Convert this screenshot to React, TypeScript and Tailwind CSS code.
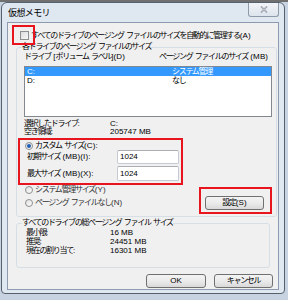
import type { ReactNode } from "react";

// Japanese runs get tightened, ASCII runs keep normal spacing
const J = ({ t, className = "" }: { t: string; className?: string }) => (
  <span className={`whitespace-pre ${className}`}>
    {t.split(/([\x20-\x7e]+)/).map((p, i) =>
      p === "" ? null : /^[\x20-\x7e]+$/.test(p) ? (
        <span key={i} className="tracking-[0.1px]">
          {p}
        </span>
      ) : (
        <span key={i} className="tracking-[-1.3px]">
          {p}
        </span>
      )
    )}
  </span>
);

const Radio = ({ checked = false }: { checked?: boolean }) => (
  <span className="w-[8px] h-[8px] rounded-full border border-[#8e8f8f] bg-gradient-to-br from-[#e2e2e2] to-[#fbfbfb] flex items-center justify-center shrink-0">
    {checked && <span className="w-[4px] h-[4px] rounded-full bg-[#1e5fb3]" />}
  </span>
);

const Btn = ({ children, className = "" }: { children: ReactNode; className?: string }) => (
  <div
    className={`h-[14px] border border-[#707070] rounded-[3px] bg-gradient-to-b from-[#f4f4f4] via-[#ebebeb] to-[#d9d9d9] flex items-center justify-center text-[8px] leading-none ${className}`}
  >
    {children}
  </div>
);

const Row = ({ label, value, w }: { label: string; value: string; w: string }) => (
  <div className="flex h-[8px] items-center text-[8px] leading-none">
    <div className={w}>
      <J t={label} />
    </div>
    <span>{value}</span>
  </div>
);

export default function App() {
  return (
    <div className="relative w-[288px] h-[300px] overflow-hidden bg-[#c7d3e0] font-['Liberation_Sans','Noto_Sans_CJK_JP',sans-serif] text-black">
      <div className="h-[2px] bg-[#707070]" />

      {/* window */}
      <div className="ml-[1px] w-[284px] h-[292px] border border-[#56616d] rounded-t-[6px] rounded-b-[4px] bg-[#dfe7f0] flex flex-col">
        {/* title bar */}
        <div className="h-[19px] flex shrink-0">
          <div className="pl-[6px] pt-[6px] text-[9px] leading-none tracking-[-0.6px]">仮想メモリ</div>
          <div className="ml-auto mr-[5px] w-[31px] h-[14px] border border-t-0 border-[#8e9aa8] rounded-b-[3px] bg-gradient-to-b from-[#f2f5f9] to-[#dde4ec] flex items-center justify-center">
            <svg width="8" height="7" viewBox="0 0 8 7">
              <path d="M1 0.5 L7 6.5 M7 0.5 L1 6.5" stroke="#8a939e" strokeWidth="1.6" />
              <path d="M1 0.5 L7 6.5 M7 0.5 L1 6.5" stroke="#f4f6f8" strokeWidth="0.5" />
            </svg>
          </div>
        </div>

        {/* client */}
        <div className="mx-[5px] h-[268px] border border-[#8d9bb0] bg-[#f0f0f0] overflow-hidden flex flex-col">
          <div className="mt-[8px] pl-[12px] flex items-center h-[9px] text-[8px] leading-none">
            <span className="w-[9px] h-[9px] border border-[#8e8f8f] bg-gradient-to-br from-[#dcdcdc] to-[#f8f8f8] shrink-0" />
            <J className="ml-[2px]" t="すべてのドライブのページング ファイルのサイズを自動的に管理する(A)" />
          </div>

          {/* group 1 */}
          <fieldset className="mt-[2px] ml-[8px] w-[261px] border border-[#d5dfe5] rounded-[3px] pl-[7px] pr-[4px] pb-[6px]">
            <legend className="-ml-[2px] px-0 h-[10px] text-[8px] leading-[10px]">
              <J t="各ドライブのページング ファイルのサイズ" />
            </legend>
            <div className="flex h-[10px] items-center text-[8px] leading-none">
              <div className="w-[135px]">
                <J t="ドライブ [ボリューム ラベル](D)" />
              </div>
              <J t="ページング ファイルのサイズ (MB)" />
            </div>
            <div className="mt-[4px] w-[248px] h-[51px] border border-[#828790] bg-white text-[8px] leading-none">
              <div className="h-[9px] bg-[#3399ff] text-white flex items-center pl-[2px]">
                <span className="w-[145px]">C:</span>
                <J t="システム管理" />
              </div>
              <div className="h-[9px] flex items-center pl-[2px]">
                <span className="w-[145px]">D:</span>
                <J t="なし" />
              </div>
            </div>

            <div className="mt-[3px]">
              <Row label="選択したドライブ:" value="C:" w="w-[86px]" />
              <Row label="空き領域:" value="205747 MB" w="w-[86px]" />
            </div>

            <div className="mt-[6px] ml-[1px] flex items-center h-[8px] text-[8px] leading-none">
              <Radio checked />
              <J className="ml-[2px]" t="カスタム サイズ(C):" />
            </div>
            <div className="flex items-center h-[14px] text-[8px] leading-none">
              <div className="pl-[3px] w-[93px]">
                <J t="初期サイズ (MB)(I):" />
              </div>
              <div className="w-[62px] h-[14px] border border-[#c5cad2] border-t-[#abadb3] rounded-[2px] bg-white flex items-center pl-[2px]">
                1024
              </div>
            </div>
            <div className="mt-[2px] flex items-center h-[15px] text-[8px] leading-none">
              <div className="pl-[3px] w-[93px]">
                <J t="最大サイズ (MB)(X):" />
              </div>
              <div className="w-[62px] h-[15px] border border-[#c5cad2] border-t-[#abadb3] rounded-[2px] bg-white flex items-center pl-[2px]">
                1024
              </div>
            </div>

            <div className="flex">
              <div className="ml-[1px]">
                <div className="mt-[5px] flex items-center h-[8px] text-[8px] leading-none">
                  <Radio />
                  <J className="ml-[2px] text-[#333]" t="システム管理サイズ(Y)" />
                </div>
                <div className="mt-[5px] flex items-center h-[8px] text-[8px] leading-none">
                  <Radio />
                  <J className="ml-[2px] text-[#333]" t="ページング ファイルなし(N)" />
                </div>
              </div>
              <Btn className="ml-auto mr-[8px] mt-[15px] w-[59px] h-[12px]">
                <J t="設定(S)" />
              </Btn>
            </div>
          </fieldset>

          {/* group 2 */}
          <fieldset className="mt-[1px] ml-[8px] w-[254px] border border-[#d5dfe5] rounded-[3px] pl-[9px] pb-[12px]">
            <legend className="-ml-[4px] px-0 h-[10px] text-[8px] leading-[10px]">
              <J t="すべてのドライブの総ページング ファイル サイズ" />
            </legend>
            <div className="mt-[1px] flex flex-col gap-[1px]">
              <Row label="最小限:" value="16 MB" w="w-[84px]" />
              <Row label="推奨:" value="24451 MB" w="w-[84px]" />
              <Row label="現在の割り当て:" value="16301 MB" w="w-[84px]" />
            </div>
          </fieldset>

          <div className="mt-[6px] flex justify-end gap-[8px] pr-[5px]">
            <Btn className="w-[60px]">OK</Btn>
            <Btn className="w-[59px]">
              <J t="キャンセル" />
            </Btn>
          </div>
        </div>
      </div>

      {/* red annotations */}
      <div className="absolute left-[12px] top-[25px] w-[23px] h-[20px] border-2 border-[#e8141e]" />
      <div className="absolute left-[18px] top-[138px] w-[165px] h-[47px] border-2 border-[#e8141e]" />
      <div className="absolute left-[199px] top-[187px] w-[73px] h-[27px] border-2 border-[#e8141e]" />
    </div>
  );
}
